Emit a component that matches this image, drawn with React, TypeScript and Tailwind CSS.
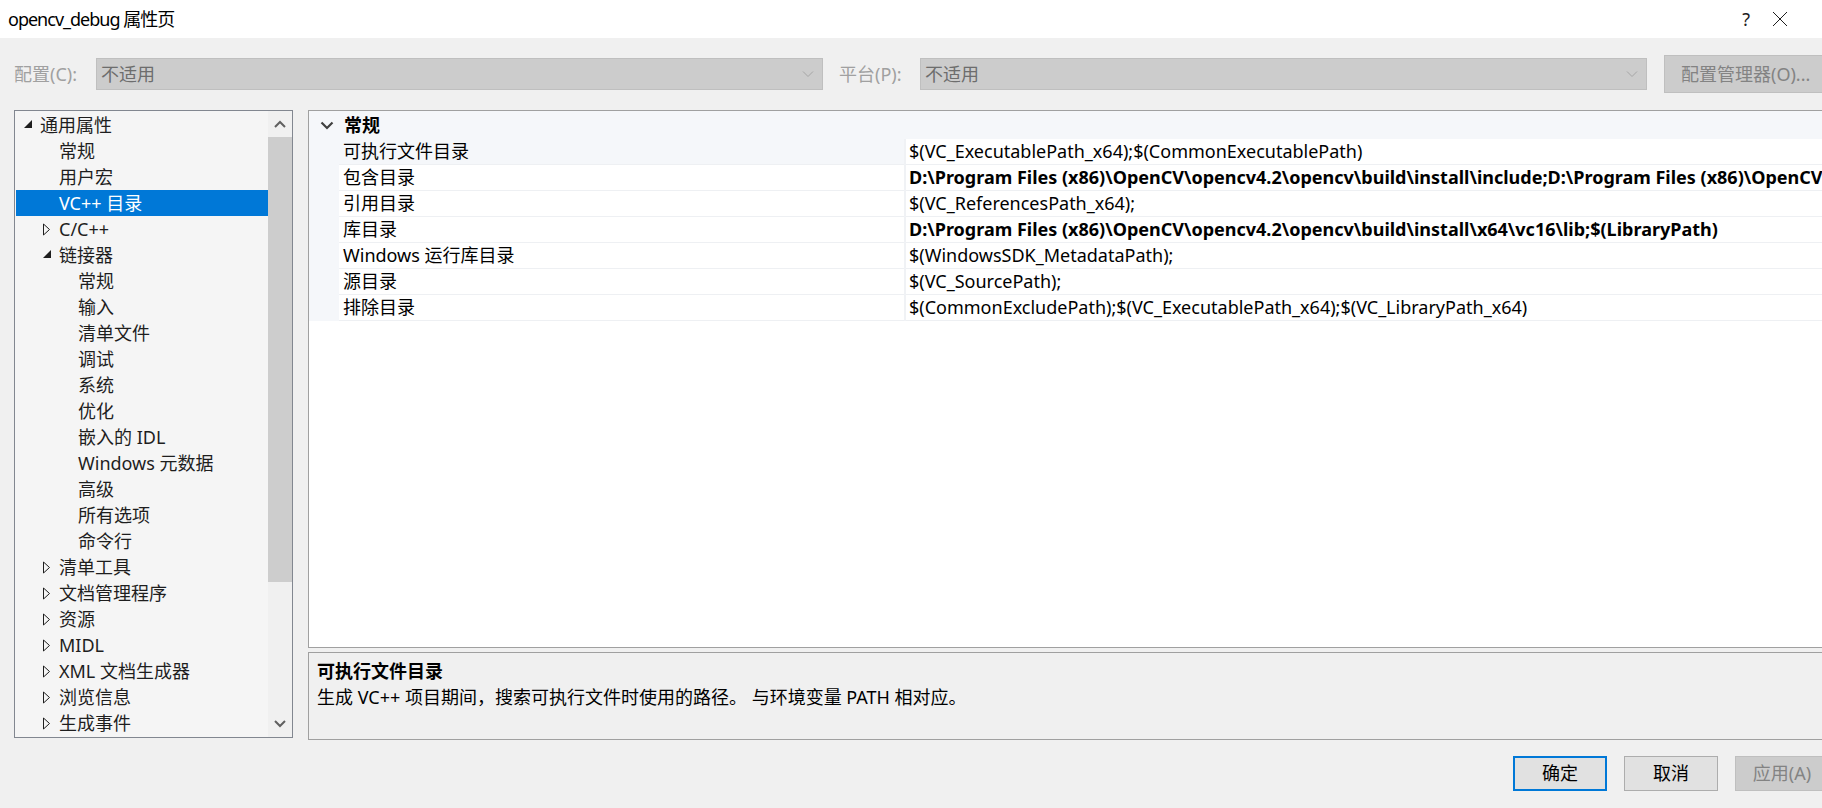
import React from "react";

const FONT = "font-['Segoe_UI','Microsoft_YaHei_UI','Noto_Sans','Noto_Sans_CJK_SC',sans-serif]";

type TreeItem = { t: string; lvl: 0 | 1 | 2; exp?: "open" | "closed"; sel?: boolean };

const tree: TreeItem[] = [
  { t: "通用属性", lvl: 0, exp: "open" },
  { t: "常规", lvl: 1 },
  { t: "用户宏", lvl: 1 },
  { t: "VC++ 目录", lvl: 1, sel: true },
  { t: "C/C++", lvl: 1, exp: "closed" },
  { t: "链接器", lvl: 1, exp: "open" },
  { t: "常规", lvl: 2 },
  { t: "输入", lvl: 2 },
  { t: "清单文件", lvl: 2 },
  { t: "调试", lvl: 2 },
  { t: "系统", lvl: 2 },
  { t: "优化", lvl: 2 },
  { t: "嵌入的 IDL", lvl: 2 },
  { t: "Windows 元数据", lvl: 2 },
  { t: "高级", lvl: 2 },
  { t: "所有选项", lvl: 2 },
  { t: "命令行", lvl: 2 },
  { t: "清单工具", lvl: 1, exp: "closed" },
  { t: "文档管理程序", lvl: 1, exp: "closed" },
  { t: "资源", lvl: 1, exp: "closed" },
  { t: "MIDL", lvl: 1, exp: "closed" },
  { t: "XML 文档生成器", lvl: 1, exp: "closed" },
  { t: "浏览信息", lvl: 1, exp: "closed" },
  { t: "生成事件", lvl: 1, exp: "closed" },
];

const props: { name: string; value: string; bold?: boolean; sel?: boolean }[] = [
  { name: "可执行文件目录", value: "$(VC_ExecutablePath_x64);$(CommonExecutablePath)", sel: true },
  {
    name: "包含目录",
    value:
      "D:\\Program Files (x86)\\OpenCV\\opencv4.2\\opencv\\build\\install\\include;D:\\Program Files (x86)\\OpenCV\\opencv4.2\\opencv\\build\\install\\include\\opencv2;$(IncludePath)",
    bold: true,
  },
  { name: "引用目录", value: "$(VC_ReferencesPath_x64);" },
  {
    name: "库目录",
    value: "D:\\Program Files (x86)\\OpenCV\\opencv4.2\\opencv\\build\\install\\x64\\vc16\\lib;$(LibraryPath)",
    bold: true,
  },
  { name: "Windows 运行库目录", value: "$(WindowsSDK_MetadataPath);" },
  { name: "源目录", value: "$(VC_SourcePath);" },
  { name: "排除目录", value: "$(CommonExcludePath);$(VC_ExecutablePath_x64);$(VC_LibraryPath_x64)" },
];

function ExpandedTri() {
  return (
    <svg width="10" height="10" viewBox="0 0 10 10" className="-mt-[3px]">
      <polygon points="9,1 9,9 1,9" fill="#1e1e1e" />
    </svg>
  );
}

function CollapsedTri() {
  return (
    <svg width="9" height="13" viewBox="0 0 9 13">
      <polygon points="1.5,1 7.5,6.5 1.5,12" fill="none" stroke="#1e1e1e" strokeWidth="1" />
    </svg>
  );
}

function ComboChevron() {
  return (
    <svg width="12" height="8" viewBox="0 0 12 8">
      <polyline points="1,1.5 6,6.5 11,1.5" fill="none" stroke="#a6a6a6" strokeWidth="1" />
    </svg>
  );
}

function Combo() {
  return (
    <div className="w-[727px] h-[32px] bg-[#cccccc] border border-[#bfbfbf] flex items-center justify-between pl-[4px] pr-[8px] text-[18px] text-[#6d6d6d] shrink-0">
      <span>不适用</span>
      <ComboChevron />
    </div>
  );
}

export default function App() {
  return (
    <div className={`w-[1822px] h-[808px] bg-[#f0f0f0] overflow-hidden flex flex-col text-[#000000] ${FONT}`}>
      {/* Title bar */}
      <div className="h-[38px] bg-white flex items-center justify-between pl-[8px] pr-[34px] shrink-0">
        <span className="text-[18px] leading-none tracking-[-1px]">opencv_debug 属性页</span>
        <div className="flex items-center gap-[22px]">
          <span className="text-[18px] leading-none text-[#1e1e1e]">?</span>
          <svg width="16" height="16" viewBox="0 0 16 16">
            <line x1="1" y1="1" x2="15" y2="15" stroke="#1e1e1e" strokeWidth="1" />
            <line x1="15" y1="1" x2="1" y2="15" stroke="#1e1e1e" strokeWidth="1" />
          </svg>
        </div>
      </div>

      {/* Config row */}
      <div className="h-[38px] mt-[17px] flex items-center pl-[14px] shrink-0 w-[1900px]">
        <span className="text-[18px] text-[#a0a0a0] w-[82px]">配置(C):</span>
        <Combo />
        <span className="text-[18px] text-[#a0a0a0] ml-[16px] w-[81px]">平台(P):</span>
        <Combo />
        <div className="ml-[17px] w-[172px] h-[38px] bg-[#cccccc] border border-[#bfbfbf] flex items-center pl-[16px] text-[18px] text-[#838383] shrink-0">
          配置管理器(O)...
        </div>
      </div>

      {/* Main area */}
      <div className="mt-[17px] h-[630px] flex pl-[14px] gap-[15px] shrink-0 w-[1900px]">
        {/* Tree */}
        <div className="w-[279px] h-[628px] border border-[#828790] bg-[#f5f5f5] flex shrink-0">
          <div className="flex-1 pt-[1px] pl-[1px]">
            {tree.map((it, i) => {
              const pad = it.lvl === 0 ? "pl-[7px]" : it.lvl === 1 ? "pl-[26px]" : "pl-[45px]";
              return (
                <div
                  key={i}
                  className={`h-[26px] flex items-center ${pad} text-[18px] whitespace-nowrap ${
                    it.sel ? "bg-[#0078d7] text-white" : "text-[#1e1e1e]"
                  }`}
                >
                  <span className="w-[17px] flex items-center shrink-0">
                    {it.exp === "open" && <ExpandedTri />}
                    {it.exp === "closed" && <CollapsedTri />}
                  </span>
                  <span>{it.t}</span>
                </div>
              );
            })}
          </div>
          {/* Scrollbar */}
          <div className="w-[24px] bg-[#f0f0f0] flex flex-col shrink-0">
            <div className="h-[26px] flex items-center justify-center">
              <svg width="12" height="8" viewBox="0 0 12 8">
                <polyline points="1,7 6,2 11,7" fill="none" stroke="#606060" strokeWidth="2" />
              </svg>
            </div>
            <div className="h-[445px] bg-[#cdcdcd]" />
            <div className="flex-1" />
            <div className="h-[26px] flex items-center justify-center">
              <svg width="12" height="8" viewBox="0 0 12 8">
                <polyline points="1,1 6,6 11,1" fill="none" stroke="#606060" strokeWidth="2" />
              </svg>
            </div>
          </div>
        </div>

        {/* Right column */}
        <div className="w-[1540px] flex flex-col gap-[4px] shrink-0">
          {/* Property grid */}
          <div className="h-[538px] border border-[#a0a0a0] bg-white flex flex-col overflow-hidden">
            <div className="h-[28px] bg-[#f5f7fa] flex items-center shrink-0">
              <span className="w-[35px] flex justify-center items-center">
                <svg width="14" height="9" viewBox="0 0 14 9">
                  <polyline points="1.5,1.5 7,7 12.5,1.5" fill="none" stroke="#404040" strokeWidth="2.2" />
                </svg>
              </span>
              <span className="text-[18px] font-bold">常规</span>
            </div>
            {props.map((p, i) => (
              <div key={i} className="h-[26px] flex shrink-0">
                <div className="w-[30px] bg-[#f5f7fa] shrink-0" />
                <div
                  className={`w-[565px] shrink-0 flex items-center pl-[4px] text-[18px] whitespace-nowrap border-b border-[#eef0f3] ${
                    p.sel ? "bg-[#f5f7fa]" : "bg-white"
                  }`}
                >
                  {p.name}
                </div>
                <div className="w-[2px] bg-[#f0f2f5] shrink-0" />
                <div
                  className={`flex-1 flex items-center pl-[3px] text-[18px] whitespace-nowrap overflow-hidden border-b border-[#eef0f3] bg-white ${
                    p.bold ? "font-bold" : ""
                  }`}
                >
                  {p.value}
                </div>
              </div>
            ))}
          </div>

          {/* Description */}
          <div className="h-[88px] border border-[#a0a0a0] bg-[#f0f0f0] pl-[8px] pt-[5px] flex flex-col">
            <div className="text-[18px] font-bold leading-[26px]">可执行文件目录</div>
            <div className="text-[18px] leading-[26px]">生成 VC++ 项目期间，搜索可执行文件时使用的路径。 与环境变量 PATH 相对应。</div>
          </div>
        </div>
      </div>

      {/* Buttons */}
      <div className="mt-[16px] flex justify-end gap-[17px] mr-[-7px] shrink-0">
        <div className="w-[94px] h-[35px] bg-[#e1e1e1] border-2 border-[#0078d7] flex items-center justify-center text-[18px]">
          确定
        </div>
        <div className="w-[94px] h-[35px] bg-[#e1e1e1] border border-[#adadad] flex items-center justify-center text-[18px]">
          取消
        </div>
        <div className="w-[94px] h-[35px] bg-[#cccccc] border border-[#bfbfbf] flex items-center justify-center text-[18px] text-[#838383]">
          应用(A)
        </div>
      </div>
    </div>
  );
}
